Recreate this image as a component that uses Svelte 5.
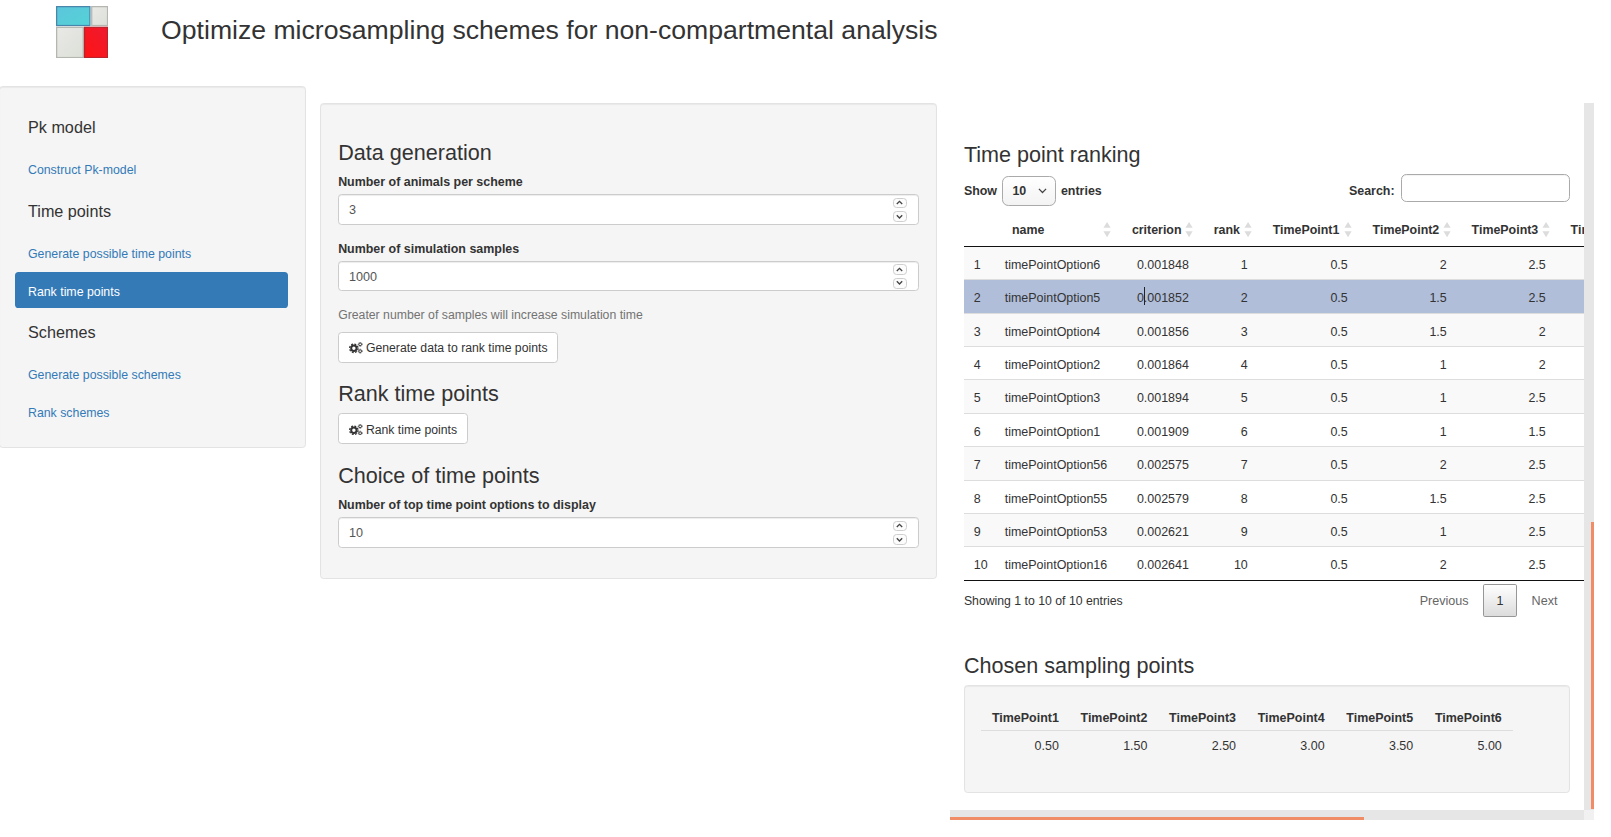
<script lang="ts">
    const rows = [
        ["timePointOption6", "0.001848", 1, 0.5, 2, 2.5, 3],
        ["timePointOption5", "0.001852", 2, 0.5, 1.5, 2.5, 3],
        ["timePointOption4", "0.001856", 3, 0.5, 1.5, 2, 3],
        ["timePointOption2", "0.001864", 4, 0.5, 1, 2, 3],
        ["timePointOption3", "0.001894", 5, 0.5, 1, 2.5, 3],
        ["timePointOption1", "0.001909", 6, 0.5, 1, 1.5, 3],
        ["timePointOption56", "0.002575", 7, 0.5, 2, 2.5, 3],
        ["timePointOption55", "0.002579", 8, 0.5, 1.5, 2.5, 3],
        ["timePointOption53", "0.002621", 9, 0.5, 1, 2.5, 3],
        ["timePointOption16", "0.002641", 10, 0.5, 2, 2.5, 3],
    ];
    const columns = ["name", "criterion", "rank", "TimePoint1", "TimePoint2", "TimePoint3", "TimePoint4"];
    const chosen = [
        ["TimePoint1", "0.50"],
        ["TimePoint2", "1.50"],
        ["TimePoint3", "2.50"],
        ["TimePoint4", "3.00"],
        ["TimePoint5", "3.50"],
        ["TimePoint6", "5.00"],
    ];
</script>

{#snippet gears()}
    <svg class="gears" viewBox="0 0 15 13" aria-hidden="true">
        <g fill="none" stroke="#333">
            <circle cx="5.4" cy="7" r="3" stroke-width="2.2" />
            <circle cx="5.4" cy="7" r="4.7" stroke-width="1.4" stroke-dasharray="2.1 1.6" />
            <circle cx="12.4" cy="2.6" r="1.5" stroke-width="1.1" />
            <circle cx="12.4" cy="2.6" r="2.3" stroke-width=".8" stroke-dasharray="1 1" />
            <circle cx="12.4" cy="10.2" r="1.5" stroke-width="1.1" />
            <circle cx="12.4" cy="10.2" r="2.3" stroke-width=".8" stroke-dasharray="1 1" />
        </g>
    </svg>
{/snippet}

{#snippet numberInput(value)}
    <div class="number">
        <input type="text" {value} readonly />
        <div class="spin">
            <span><svg viewBox="0 0 10 6"><path d="M2 4.5 5 1.5 8 4.5" /></svg></span>
            <span><svg viewBox="0 0 10 6"><path d="M2 1.5 5 4.5 8 1.5" /></svg></span>
        </div>
    </div>
{/snippet}

<div class="page">
    <header>
        <svg class="logo" viewBox="0 0 58 58" aria-hidden="true">
            <defs>
                <linearGradient id="blue" x1="0" y1="0" x2="1" y2="1">
                    <stop offset="0" stop-color="#5cc6dc" />
                    <stop offset="1" stop-color="#54d2d6" />
                </linearGradient>
                <linearGradient id="pale" x1="0" y1="0" x2="1" y2="1">
                    <stop offset="0" stop-color="#e9e9e6" />
                    <stop offset="1" stop-color="#dcdfd8" />
                </linearGradient>
                <linearGradient id="red" x1="1" y1="0" x2="0" y2="1">
                    <stop offset="0" stop-color="#ee1a30" />
                    <stop offset="1" stop-color="#fe1414" />
                </linearGradient>
            </defs>
            <rect x=".7" y=".7" width="37" height="21" fill="url(#blue)" stroke="#4a86ac" stroke-width="1.4" />
            <rect x="39.7" y=".7" width="17.6" height="21" fill="url(#pale)" stroke="#b4b6b0" stroke-width="1.4" />
            <rect x=".7" y="23.7" width="29.6" height="33.6" fill="url(#pale)" stroke="#b4b6b0" stroke-width="1.4" />
            <rect x="31.7" y="23.7" width="25.6" height="33.6" fill="url(#red)" stroke="#b8242c" stroke-width="1.4" />
        </svg>
        <h1>Optimize microsampling schemes for non-compartmental analysis</h1>
    </header>

    <main>
        <nav class="well sidebar">
            <div class="nav-title">Pk model</div>
            <a href="#pk">Construct Pk-model</a>
            <div class="nav-title">Time points</div>
            <a href="#gen">Generate possible time points</a>
            <a href="#rank" class="active">Rank time points</a>
            <div class="nav-title">Schemes</div>
            <a href="#sch">Generate possible schemes</a>
            <a href="#rsch">Rank schemes</a>
        </nav>

        <section class="well controls">
            <h3 class="first">Data generation</h3>
            <div class="form-group">
                <label for="">Number of animals per scheme</label>
                {@render numberInput(3)}
            </div>
            <div class="form-group">
                <label for="">Number of simulation samples</label>
                {@render numberInput(1000)}
            </div>
            <p class="help">Greater number of samples will increase simulation time</p>
            <button>{@render gears()} Generate data to rank time points</button>
            <h3>Rank time points</h3>
            <button>{@render gears()} Rank time points</button>
            <h3>Choice of time points</h3>
            <div class="form-group">
                <label for="">Number of top time point options to display</label>
                {@render numberInput(10)}
            </div>
        </section>

        <section class="results">
            <div class="scroller">
                <div class="content">
                    <h3 class="ranking-title">Time point ranking</h3>
                    <div class="toolbar">
                        <div class="length">
                            Show
                            <span class="select">
                                <select><option>10</option><option>25</option></select>
                                <svg viewBox="0 0 10 6" aria-hidden="true"><path d="M1 1 5 5 9 1" /></svg>
                            </span>
                            entries
                        </div>
                        <div class="search">
                            <span>Search:</span>
                            <input type="text" />
                        </div>
                    </div>

                    <table class="ranking">
                        <colgroup>
                            <col style="width: 34.4px" />
                            <col style="width: 135.6px" />
                            <col style="width: 91px" />
                            <col style="width: 65.5px" />
                            <col style="width: 111px" />
                            <col style="width: 110px" />
                            <col style="width: 110px" />
                            <col style="width: 110px" />
                        </colgroup>
                        <thead>
                            <tr>
                                <th></th>
                                {#each columns as col}
                                    <th>
                                        {col}
                                        <svg class="sort" viewBox="0 0 9 19" aria-hidden="true">
                                            <path d="M4.5 1 8.5 7.5H.5Z" />
                                            <path d="M4.5 18 8.5 11.5H.5Z" />
                                        </svg>
                                    </th>
                                {/each}
                            </tr>
                        </thead>
                        <tbody>
                            {#each rows as row, i}
                                <tr class:selected={i === 1}>
                                    <td>{i + 1}</td>
                                    <td class="left">{row[0]}</td>
                                    <td class="num">
                                        {row[1]}
                                        {#if i === 1}<span class="caret"></span>{/if}
                                    </td>
                                    {#each row.slice(2) as v}
                                        <td class="num">{v}</td>
                                    {/each}
                                </tr>
                            {/each}
                        </tbody>
                    </table>

                    <div class="footer">
                        <div class="info">Showing 1 to 10 of 10 entries</div>
                        <div class="pager">
                            <span>Previous</span>
                            <span class="current">1</span>
                            <span>Next</span>
                        </div>
                    </div>

                    <h3 class="chosen-title">Chosen sampling points</h3>
                    <div class="well chosen">
                        <table>
                            <thead>
                                <tr>
                                    {#each chosen as c}<th>{c[0]}</th>{/each}
                                </tr>
                            </thead>
                            <tbody>
                                <tr>
                                    {#each chosen as c}<td>{c[1]}</td>{/each}
                                </tr>
                            </tbody>
                        </table>
                    </div>
                </div>
            </div>
            <div class="vtrack"><div class="vthumb"></div></div>
            <div class="htrack"><div class="hthumb"></div></div>
            <div class="corner"></div>
        </section>
    </main>
</div>

<style>
    :global(body) {
        margin: 0;
        background: #fff;
    }

    .page {
        zoom: 0.9;
        width: 1790px;
        font-family: "Liberation Sans", Arial, sans-serif;
        font-size: 13.65px;
        line-height: 20px;
        color: #333;
    }

    header {
        display: flex;
        align-items: flex-start;
        height: 95.6px;
        padding: 7px 0 0 62px;
        box-sizing: border-box;
    }

    .logo {
        width: 58px;
        height: 58px;
        flex: none;
    }

    h1 {
        margin: 11px 0 0 59px;
        font-size: 29.57px;
        font-weight: 500;
        line-height: 33px;
    }

    h3 {
        margin: 22px 0 8px;
        font-size: 24px;
        font-weight: 500;
        line-height: 26.4px;
    }

    main {
        display: flex;
        align-items: flex-start;
    }

    .well {
        box-sizing: border-box;
        background: #f5f5f5;
        border: 1px solid #e3e3e3;
        border-radius: 4px;
        box-shadow: inset 0 1px 1px rgba(0, 0, 0, 0.05);
    }

    .sidebar {
        width: 341px;
        margin-left: -1px;
        height: 402px;
        padding: 20px 19px 19px 16px;
        display: flex;
        flex-direction: column;
        gap: 2px;
    }

    .nav-title {
        height: 49px;
        line-height: 49px;
        padding-left: 15px;
        font-size: 18px;
    }

    .nav-title:not(:first-child) {
        line-height: 51px;
    }

    .sidebar a {
        display: block;
        padding: 11.5px 15px 8.5px;
        font-size: 13.72px;
        color: #337ab7;
        text-decoration: none;
        border-radius: 4px;
    }

    .sidebar a.active {
        background: #337ab7;
        color: #fff;
    }

    .controls {
        width: 685.4px;
        margin: 18.8px 0 0 15.6px;
        padding: 19px;
    }

    .form-group {
        margin-bottom: 15px;
    }

    label {
        display: block;
        margin-bottom: 3.5px;
        padding-top: 1.5px;
        font-size: 13.83px;
        font-weight: 700;
    }

    .number {
        position: relative;
    }

    .number input {
        display: block;
        width: 100%;
        height: 34px;
        box-sizing: border-box;
        padding: 8px 11px 6px;
        font: inherit;
        font-size: 14px;
        color: #555;
        background: #fff;
        border: 1px solid #ccc;
        border-radius: 4px;
        box-shadow: inset 0 1px 1px rgba(0, 0, 0, 0.075);
        outline: none;
    }

    .spin {
        position: absolute;
        top: 3.8px;
        right: 13.5px;
        display: flex;
        flex-direction: column;
        gap: 3px;
    }

    .spin span {
        display: flex;
        align-items: center;
        justify-content: center;
        box-sizing: border-box;
        width: 15px;
        height: 12px;
        border: 1.3px solid #cfcfcf;
        border-radius: 4px;
        background: #fcfcfc;
    }

    .spin svg {
        width: 10px;
        height: 6px;
    }

    .spin path {
        fill: none;
        stroke: #444;
        stroke-width: 1.5;
    }

    .help {
        margin: 0 0 9px;
        padding-top: 1px;
        color: #737373;
    }

    button {
        display: block;
        height: 34px;
        padding: 7px 11px 5px;
        font: inherit;
        font-size: 13.6px;
        color: #333;
        background: #fff;
        border: 1px solid #ccc;
        border-radius: 4px;
        white-space: nowrap;
    }

    .gears {
        width: 15px;
        height: 13px;
        vertical-align: -2px;
    }

    .results {
        position: relative;
        width: 715.4px;
        height: 796.6px;
        margin: 18.8px 0 0 14.6px;
        display: grid;
        grid-template-columns: 1fr 11px;
        grid-template-rows: 1fr 11px;
        background: #fff;
    }

    .scroller {
        overflow: hidden;
        min-width: 0;
    }

    .content {
        width: 673.6px;
        padding-left: 15.4px;
    }

    h3.ranking-title {
        margin: 44px 0 9px;
    }

    .toolbar {
        display: flex;
        justify-content: space-between;
        align-items: flex-start;
        height: 34px;
        font-size: 13.83px;
        font-weight: 700;
    }

    .length {
        display: flex;
        align-items: center;
        gap: 5px;
        height: 37px;
    }

    .select {
        position: relative;
        display: block;
        height: 34px;
        margin-left: 1px;
    }

    .select svg {
        position: absolute;
        top: 14px;
        right: 11px;
        width: 10px;
        height: 6px;
        fill: none;
        stroke: #444;
        stroke-width: 1.4;
    }

    select {
        display: block;
        width: 60px;
        height: 34px;
        padding: 4px 10px;
        appearance: none;
        font: inherit;
        color: #333;
        background: linear-gradient(to bottom, #fff, #f3f3f3);
        border: 1px solid #aaa;
        border-radius: 7px;
    }

    .search {
        display: flex;
        align-items: flex-start;
        gap: 7px;
        height: 31px;
    }

    .search span {
        padding-top: 8.5px;
    }

    .search input {
        width: 188px;
        height: 31px;
        box-sizing: border-box;
        padding: 4px;
        background: #fff;
        border: 1px solid #aaa;
        border-radius: 6px;
        box-shadow: inset 0 1px 1px rgba(0, 0, 0, 0.05);
        outline: none;
    }

    .ranking {
        width: 767.5px;
        margin-top: 8px;
        table-layout: fixed;
        border-collapse: collapse;
    }

    .ranking th {
        position: relative;
        height: 38px;
        padding: 3px 0 0 16.7px;
        box-sizing: border-box;
        font-size: 13.8px;
        text-align: left;
        white-space: nowrap;
        border-bottom: 1px solid #111;
    }

    .ranking th:nth-child(2) {
        padding-left: 19px;
    }

    .sort {
        position: absolute;
        top: 10px;
        right: 6px;
        width: 9px;
        height: 19px;
        fill: #dcdcdc;
    }

    .ranking td {
        position: relative;
        height: 36px;
        box-sizing: border-box;
        padding: 10px 11px 6px;
        font-size: 13.85px;
        white-space: nowrap;
        border-top: 1px solid #ddd;
    }

    .ranking tbody tr:first-child td {
        border-top: none;
    }

    .ranking tbody tr:nth-child(odd) {
        background: #f9f9f9;
    }

    .ranking tbody tr.selected {
        background: #b0bed9;
    }

    .ranking tbody tr:last-child td {
        border-bottom: 1px solid #111;
    }

    .ranking td.num {
        text-align: right;
    }

    .caret {
        position: absolute;
        left: 30.3px;
        top: 7px;
        width: 1px;
        height: 21px;
        background: #222;
    }

    .footer {
        display: flex;
        justify-content: space-between;
        align-items: flex-start;
        height: 39.5px;
    }

    .info {
        padding-top: 12px;
    }

    .pager {
        display: flex;
        align-items: center;
        margin-top: 4px;
        font-size: 14px;
        color: #666;
    }

    .pager span {
        padding: 7px 14px;
        line-height: 20px;
    }

    .pager .current {
        margin: 0 2px;
        color: #333;
        background: linear-gradient(to bottom, #fff, #dcdcdc);
        border: 1px solid #979797;
        border-radius: 2px;
    }

    h3.chosen-title {
        margin: 41.9px 0 8px;
    }

    .chosen {
        height: 120.5px;
        padding: 19px;
    }

    .chosen table {
        margin-left: -1px;
        border-collapse: collapse;
        border-spacing: 0;
        font-size: 13.85px;
    }

    .chosen th,
    .chosen td {
        width: 73.5px;
        padding: 6.5px 12.05px 3.5px;
        text-align: right;
        white-space: nowrap;
    }

    .chosen th {
        border-bottom: 1px solid #ddd;
    }

    .vtrack {
        position: relative;
        background: #e6e6e6;
    }

    .vthumb {
        position: absolute;
        top: 465.6px;
        right: 0;
        width: 3.3px;
        height: 318.6px;
        background: #f08c66;
    }

    .htrack {
        position: relative;
        background: #e6e6e6;
    }

    .hthumb {
        position: absolute;
        left: 0;
        bottom: 0;
        width: 460px;
        height: 3.3px;
        background: #f08c66;
    }

    .corner {
        background: #f1f1f1;
    }
</style>
